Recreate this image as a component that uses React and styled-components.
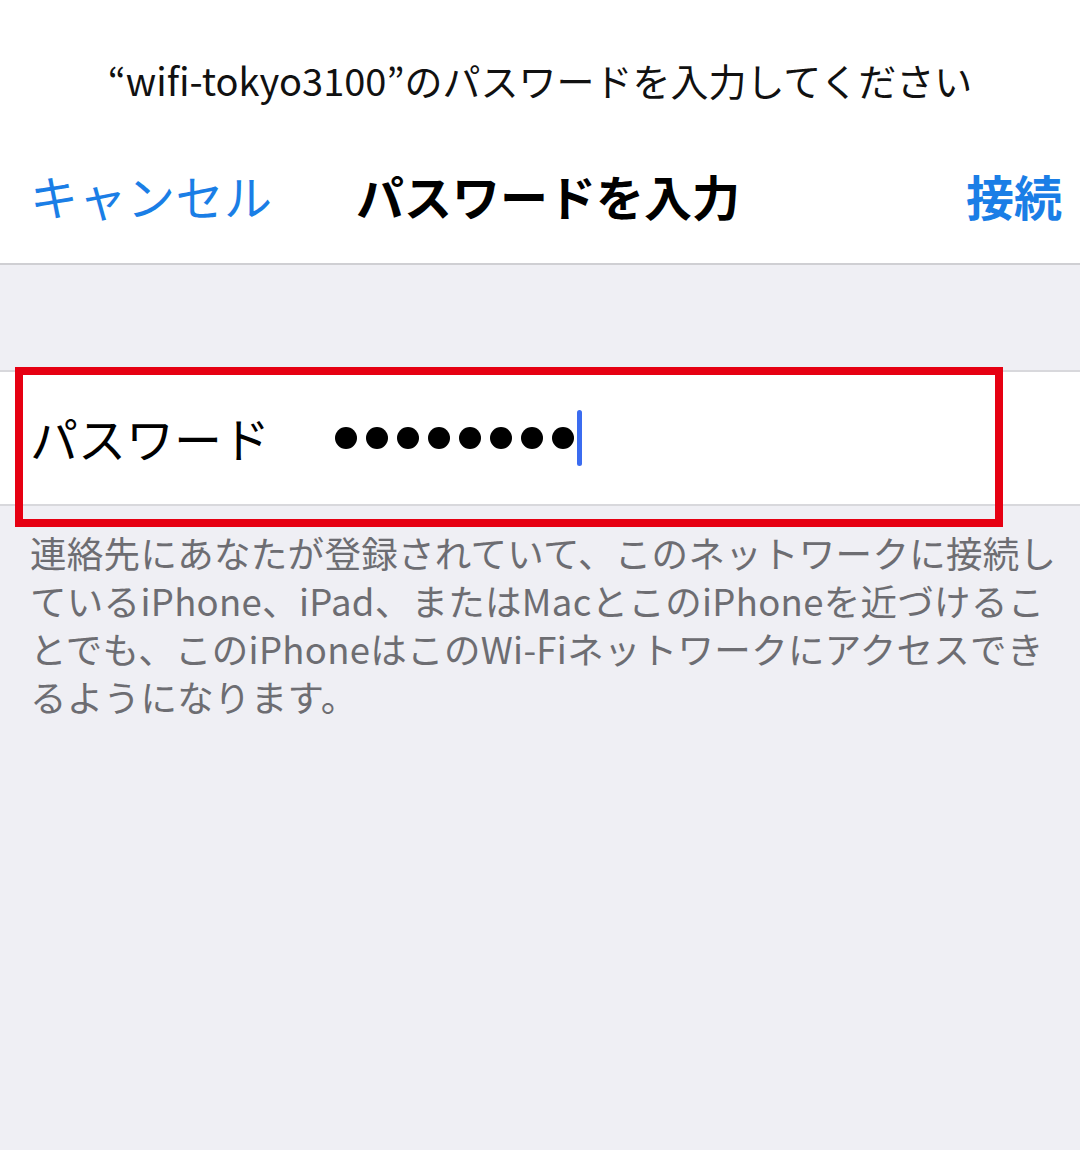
import React from "react";
import styled, { createGlobalStyle } from "styled-components";

const GlobalStyle = createGlobalStyle`
    html, body {
        margin: 0;
        padding: 0;
        background: #efeff4;
    }
    body {
        font-family: "Noto Sans CJK JP", "Noto Sans", sans-serif;
    }
`

const Screen = styled.div`
    width: 1080px;
    min-height: 1150px;
    background: #efeff4;
    position: relative;
    overflow: hidden;
`

const Header = styled.div`
    background: #ffffff;
    border-bottom: 2px solid #cfcfd3;
    height: 263px;
    display: flex;
    flex-direction: column;
`

const Prompt = styled.div`
    text-align: center;
    font-size: 38px;
    color: #111;
    padding-top: 54px;
    height: 52px;
    line-height: 52px;
    letter-spacing: 0;
`

const NavBar = styled.div`
    display: grid;
    grid-template-columns: 1fr auto 1fr;
    align-items: center;
    padding: 0 18px 0 30px;
    margin-top: 59px;
    height: 60px;
`

const NavButton = styled.div`
    font-size: 48px;
    color: #1a7ee6;
    font-weight: ${p => (p.$bold ? 700 : 400)};
    justify-self: ${p => (p.$right ? "end" : "start")};
    line-height: 60px;
    letter-spacing: ${p => (p.$bold ? "0" : "0.5px")};
`

const Title = styled.div`
    font-size: 48px;
    font-weight: 700;
    color: #000;
    line-height: 60px;
    margin-left: 4px;
`

const Gap = styled.div`
    height: 105px;
`

const Row = styled.div`
    background: #ffffff;
    border-top: 2px solid #d8d8dc;
    border-bottom: 2px solid #d8d8dc;
    height: 132px;
    display: flex;
    align-items: center;
    padding-left: 30px;
`

const Label = styled.div`
    font-size: 48px;
    color: #000;
    width: 305px;
    line-height: 60px;
    margin-top: -2px;
`

const Dots = styled.div`
    display: flex;
    align-items: center;
    gap: 9px;
`

const Dot = styled.span`
    width: 22px;
    height: 22px;
    border-radius: 50%;
    background: #000;
`

const Caret = styled.span`
    width: 5px;
    height: 56px;
    border-radius: 3px;
    background: #3b6cf0;
    margin-left: -6px;
`

const Footer = styled.div`
    padding: 23px 20px 0 30px;
    font-size: 36.5px;
    line-height: 48px;
    color: #6d6d72;
    white-space: nowrap;
    letter-spacing: 0.3px;
`

const Highlight = styled.div`
    position: absolute;
    left: 15px;
    top: 367px;
    width: 972px;
    height: 144px;
    border: 8px solid #e60012;
    pointer-events: none;
`

export default function App() {
    return (
        <Screen>
            <GlobalStyle />
            <Header>
                <Prompt>“wifi-tokyo3100”のパスワードを入力してください</Prompt>
                <NavBar>
                    <NavButton>キャンセル</NavButton>
                    <Title>パスワードを入力</Title>
                    <NavButton $bold $right>接続</NavButton>
                </NavBar>
            </Header>
            <Gap />
            <Row>
                <Label>パスワード</Label>
                <Dots>
                    {Array.from({ length: 8 }).map((_, i) => <Dot key={i} />)}
                    <Caret />
                </Dots>
            </Row>
            <Footer>
                連絡先にあなたが登録されていて、このネットワークに接続し<br />
                ているiPhone、iPad、またはMacとこのiPhoneを近づけるこ<br />
                とでも、このiPhoneはこのWi-Fiネットワークにアクセスでき<br />
                るようになります。
            </Footer>
            <Highlight />
        </Screen>
    );
}
